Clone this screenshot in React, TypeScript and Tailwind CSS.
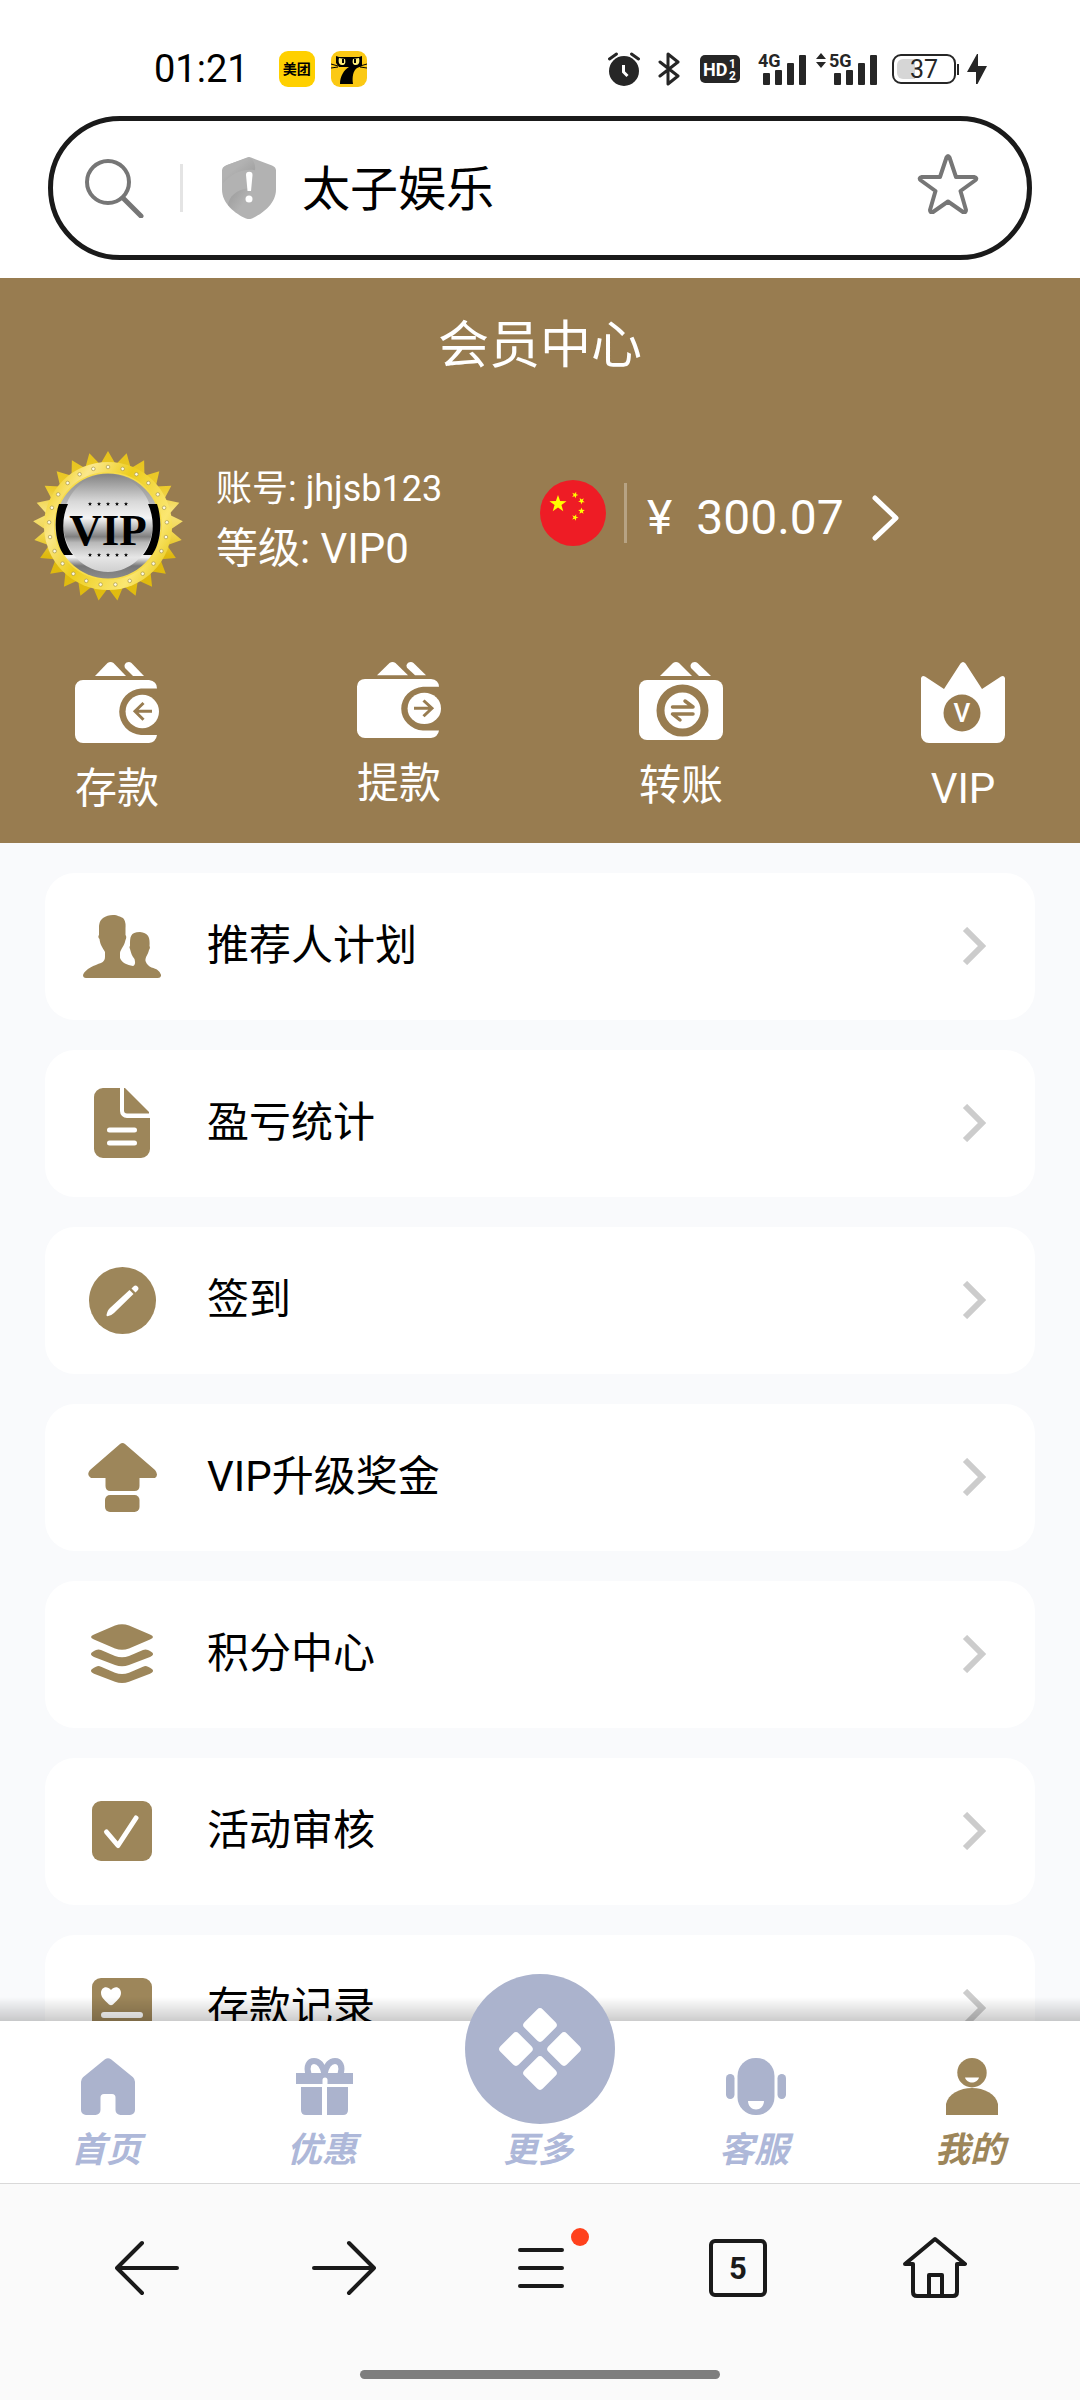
import { useState } from "react";
import type { ReactNode } from "react";

const starPoints = (cx: number, cy: number, r: number, turn = 0, inner = 0.4) =>
  Array.from({ length: 10 }, (_, i) => {
    const a = ((i * 36 - 90 + turn) * Math.PI) / 180;
    const d = i % 2 ? r * inner : r;
    return `${(cx + d * Math.cos(a)).toFixed(2)},${(cy + d * Math.sin(a)).toFixed(2)}`;
  }).join(" ");

const polar = (r: number, deg: number) => {
  const a = ((deg - 90) * Math.PI) / 180;
  return [75 + r * Math.cos(a), 75 + r * Math.sin(a)];
};

const rays = Array.from({ length: 25 }, (_, i) => i * 14.4);

/* ---------- status bar ---------- */

function SignalBars() {
  return (
    <>
      <rect x="0" y="20" width="7" height="12" rx="1" />
      <rect x="12" y="17" width="7" height="15" rx="1" />
      <rect x="24" y="10" width="7" height="22" rx="1" />
      <rect x="36" y="2" width="7" height="30" rx="1" />
    </>
  );
}

function StatusBar() {
  return (
    <div className="flex h-[42px] items-center justify-between pl-[154px] pr-[93px]">
      <div className="flex items-center">
        <span className="text-[38px] leading-[42px] text-black">01:21</span>
        <span className="ml-[30px] flex size-9 items-center justify-center rounded-[9px] bg-[#ffd000] text-[14px] leading-none font-bold text-black">
          美团
        </span>
        <svg className="ml-4 size-9" viewBox="0 0 36 36">
          <rect width="36" height="36" rx="9" fill="#fbc914" />
          <path d="M5 5l3 1h20l3-1v10l-5 2c-4 3-5 9-4 16H9c0-8 4-14 9-17H8l-3-4z" fill="#000" />
          <path d="M0 13l7 2M0 17l7-1M36 13l-7 2M36 17l-7-1" stroke="#000" strokeWidth="1" />
          <path d="M8 7c-1 4 0 7 3 7s4-2 3-6zM28 7c1 4 0 7-3 7s-4-2-3-6z" fill="#ffef7a" />
          <path d="M12 8v4M24 8v4" stroke="#000" strokeWidth="2" />
        </svg>
      </div>

      <div className="flex items-center text-[#262626]">
        <svg className="h-[34px] w-8" viewBox="0 0 32 34" fill="currentColor">
          <circle cx="16" cy="19" r="15" />
          <path d="M1.500 7l7-5M30.500 7l-7-5" stroke="currentColor" strokeWidth="3" strokeLinecap="round" />
          <path d="M15.500 13v7l4 4" stroke="#fff" strokeWidth="3" fill="none" />
        </svg>
        <svg className="ml-[18px] h-[34px] w-[22px]" viewBox="0 0 22 34" fill="none" stroke="currentColor" strokeWidth="3" strokeLinejoin="round" strokeLinecap="round">
          <path d="M2 10l18 14-10 8V2l10 8L2 24" />
        </svg>
        <svg className="ml-5 h-7 w-10" viewBox="0 0 40 28" fontFamily="Roboto, sans-serif" fontWeight="700">
          <rect width="40" height="28" rx="5" fill="currentColor" />
          <text x="3" y="21" fontSize="18" fill="#fff">HD</text>
          <text x="29" y="13" fontSize="12" fill="#fff">1</text>
          <text x="29" y="25" fontSize="12" fill="#fff">2</text>
        </svg>
        <svg className="ml-[18px] h-[34px] w-12" viewBox="0 0 48 34" fill="currentColor" fontFamily="Roboto, sans-serif" fontWeight="700">
          <g transform="translate(5 1)"><SignalBars /></g>
          <text x="0" y="15" fontSize="18" stroke="#fff" strokeWidth="3" paintOrder="stroke">4G</text>
        </svg>
        <svg className="ml-[10px] h-[34px] w-[61px]" viewBox="0 0 61 34" fill="currentColor" fontFamily="Roboto, sans-serif" fontWeight="700">
          <path d="M0 7l5-6 5 6zM0 10l5 6 5-6z" />
          <g transform="translate(18 1)"><SignalBars /></g>
          <text x="13" y="15" fontSize="18" stroke="#fff" strokeWidth="3" paintOrder="stroke">5G</text>
        </svg>
        <svg className="ml-[15px] h-8 w-[68px]" viewBox="0 0 68 32">
          <rect x="1" y="2" width="62" height="28" rx="8" fill="none" stroke="currentColor" strokeWidth="2" />
          <path d="M11 6h12v20H11a6 6 0 0 1-6-6v-8a6 6 0 0 1 6-6z" fill="#d6d6d6" />
          <rect x="65" y="11" width="2" height="11" fill="currentColor" />
          <text x="32" y="25" fontSize="25" textAnchor="middle" fill="currentColor" fontFamily="Roboto, sans-serif">37</text>
        </svg>
        <svg className="ml-[7px] h-8 w-5" viewBox="0 0 20 32" fill="currentColor">
          <path d="M10 1L0 19h9v12h1.500L20 13h-9V1z" />
        </svg>
      </div>
    </div>
  );
}

function AddressBar() {
  return (
    <div className="mx-12 mt-[26px] mb-[18px] flex h-36 items-center rounded-full border-5 border-[#1a1a1a] pr-12 pl-8">
      <svg className="size-[60px] shrink-0" viewBox="0 0 60 60" fill="none" stroke="#767676">
        <circle cx="23" cy="24" r="21" strokeWidth="4" />
        <path d="M39 41l17 17" strokeWidth="5" strokeLinecap="round" />
      </svg>
      <div className="ml-[35px] h-12 w-[3px] bg-[#e4e4e4]" />
      <svg className="ml-[39px] h-[62px] w-[54px] shrink-0" viewBox="0 0 54 62">
        <defs>
          <linearGradient id="shieldTop" x1="0" y1="0" x2="1" y2="1">
            <stop offset="0.400" stopColor="#b2b2b2" />
            <stop offset="1" stopColor="#979797" />
          </linearGradient>
          <linearGradient id="shieldLow" x1="0" y1="0" x2="1" y2="1">
            <stop offset="0" stopColor="#999" />
            <stop offset="0.600" stopColor="#b2b2b2" />
          </linearGradient>
        </defs>
        <path d="M25 .5q2-.8 4 0l21 8q4 1.500 4 5v19c0 14-13 24-24 29q-3 1.200-6 0C13 56.500 0 46.500 0 32.500v-19q0-3.500 4-5z" fill="#b2b2b2" />
        <path d="M27 .3c4 2 7 7 6 13-12-2-23 3-32 13V13q0-3.500 4-5z" fill="url(#shieldTop)" />
        <path d="M6 48c1-8 8-16 22-17v31q-14-5-22-14z" fill="url(#shieldLow)" />
        <path d="M24 18a3.200 3.200 0 0 1 6.500 0L29 34h-3.500z" fill="#fff" />
        <circle cx="27" cy="42" r="3.500" fill="#fff" />
      </svg>
      <input
        aria-label="地址栏"
        defaultValue="太子娱乐"
        className="mt-1 ml-[26px] min-w-0 flex-1 bg-transparent text-[48px] leading-[64px] text-black outline-none"
      />
      <button aria-label="收藏" className="mb-2">
        <svg className="h-[60px] w-[62px]" viewBox="0 0 62 60" fill="none" stroke="#767676" strokeWidth="4" strokeLinejoin="round">
          <path d="M29.500 3.500q1.500-3 3 0L39 23h18q4 1 1 3.500L43.500 37l5.500 19q0 3-3 2L31 47.500 16 58q-3 1-3-2l5.500-19L4 26.500Q1 24 5 23h18z" />
        </svg>
      </button>
    </div>
  );
}

/* ---------- member header ---------- */

function VipBadge() {
  return (
    <svg className="size-[150px] shrink-0" viewBox="0 0 150 150">
      <defs>
        <linearGradient id="vipRay" gradientUnits="userSpaceOnUse" x1="0" y1="0" x2="0" y2="150">
          <stop offset="0" stopColor="#e6c21a" />
          <stop offset="0.250" stopColor="#eccb2e" />
          <stop offset="0.400" stopColor="#f7e27c" />
          <stop offset="0.550" stopColor="#f0d650" />
          <stop offset="0.700" stopColor="#dfb80e" />
          <stop offset="1" stopColor="#e0bc10" />
        </linearGradient>
        <linearGradient id="vipRing" x1="0" y1="0.200" x2="1" y2="0.800">
          <stop offset="0" stopColor="#f0cf1e" />
          <stop offset="0.200" stopColor="#fbe88c" />
          <stop offset="0.450" stopColor="#edcd1c" />
          <stop offset="0.800" stopColor="#fbe772" />
          <stop offset="1" stopColor="#e8c818" />
        </linearGradient>
        <linearGradient id="vipRim" x1="0" y1="0" x2="0" y2="1">
          <stop offset="0" stopColor="#8a8a8a" />
          <stop offset="0.500" stopColor="#d8d8d8" />
          <stop offset="0.800" stopColor="#efefef" />
          <stop offset="0.880" stopColor="#777" />
          <stop offset="1" stopColor="#8b8b8b" />
        </linearGradient>
        <linearGradient id="vipFace" x1="0" y1="0" x2="0" y2="1">
          <stop offset="0" stopColor="#828282" />
          <stop offset="0.280" stopColor="#d8d8d8" />
          <stop offset="0.450" stopColor="#f4f4f4" />
          <stop offset="0.640" stopColor="#7f7f7f" />
          <stop offset="0.700" stopColor="#b8b8b8" />
          <stop offset="0.850" stopColor="#e6e6e6" />
          <stop offset="1" stopColor="#cfcfcf" />
        </linearGradient>
      </defs>
      <polygon
        points={rays.flatMap((deg) => [polar(75, deg), polar(62, deg + 7.2)]).map((p) => p.join(",")).join(" ")}
        fill="url(#vipRay)"
      />
      <circle cx="75" cy="75" r="64" fill="url(#vipRing)" />
      {rays.map((deg) => {
        const [x, y] = polar(59, deg);
        return <circle key={deg} cx={x} cy={y} r="1.800" fill="#fffbe0" stroke="#a8964a" strokeWidth="0.700" />;
      })}
      <circle cx="75" cy="75" r="54" fill="#f7dc4a" />
      <circle cx="75" cy="75" r="52.500" fill="url(#vipRim)" />
      <ellipse cx="75" cy="72" rx="45" ry="49" fill="url(#vipFace)" />
      <path d="M26 53h9C28 68 28 89 40 104H31C21 90 21 67 26 53z" fill="#000" />
      <path d="M124 53h-9c7 15 7 36-5 51h9c10-14 10-37 5-51z" fill="#000" />
      {[57, 66, 75, 84, 93].map((x) => (
        <g key={x}>
          <polygon points={starPoints(x, 53, 2.2)} />
          <polygon points={starPoints(x, 104, 2.2)} />
        </g>
      ))}
      <text x="75" y="94" fontSize="45" fontWeight="700" textAnchor="middle" fontFamily="Liberation Serif, serif">VIP</text>
    </svg>
  );
}

function ChinaFlag() {
  return (
    <svg className="size-[66px]" viewBox="0 0 66 66">
      <circle cx="33" cy="33" r="33" fill="#ee1c25" />
      <g fill="#ff0">
        <polygon points={starPoints(18, 24, 9)} />
        <polygon points={starPoints(35, 15, 3.5, 20)} />
        <polygon points={starPoints(41.5, 21, 3.5, 40)} />
        <polygon points={starPoints(41.5, 31, 3.5)} />
        <polygon points={starPoints(35, 37.5, 3.5, 20)} />
      </g>
    </svg>
  );
}

function WalletIcon({ arrow, className }: { arrow: string; className: string }) {
  return (
    <svg className={className} viewBox="0 0 84 81" preserveAspectRatio="none" fill="#fff">
      <path d="M32.500 1q3-2 6 0L51 14H20z" />
      <path d="M50 6q-1.500-3.500 1.500-5.500 3-1.200 5 .5L69 14H58z" />
      <path d="M8 18h66q8 1 8 8.500H66a23.300 23.300 0 0 0 0 46.500h16q-1 7-8 8H8a8 8 0 0 1-8-8V26a8 8 0 0 1 8-8z" />
      <circle cx="67.300" cy="49.500" r="16.700" />
      <path d={arrow} stroke="#987c50" strokeWidth="3" fill="none" />
    </svg>
  );
}

function TransferIcon() {
  return (
    <svg className="h-[78px] w-[84px]" viewBox="0 0 84 78" fill="#fff">
      <path d="M34 1q3-2 6 0l13 13H21z" />
      <path d="M52 6q-1.500-3.500 1.500-5.500 3-1.200 5 .5L72 14H60z" />
      <rect y="18" width="84" height="60" rx="8" />
      <circle cx="43.500" cy="48.500" r="22" fill="none" stroke="#987c50" strokeWidth="8" />
      <path d="M33.500 45H54l-8-6M54 52H33.500l7.500 6" fill="none" stroke="#987c50" strokeWidth="3.500" strokeLinecap="round" strokeLinejoin="round" />
    </svg>
  );
}

function CrownIcon() {
  return (
    <svg className="h-[81px] w-[84px]" viewBox="0 0 84 81">
      <path d="M39.500 1.500q2.500-3 5 0L61 27l19-12.500q3-1.500 4 1.500v57a8 8 0 0 1-8 8H8a8 8 0 0 1-8-8V16q1-3 4-1.500L23 27z" fill="#fff" />
      <circle cx="41" cy="51" r="18.500" fill="#987c50" />
      <text x="41" y="60" fontSize="26" fontWeight="500" textAnchor="middle" fill="#fff" fontFamily="Roboto, sans-serif">V</text>
    </svg>
  );
}

const actions: { label: string; icon: ReactNode }[] = [
  { label: "存款", icon: <WalletIcon className="h-[81px] w-[84px]" arrow="M77 49.300H60M68.500 41l-8.500 8.300 8.500 8.500" /> },
  { label: "提款", icon: <WalletIcon className="h-[76px] w-[84px]" arrow="M57 49.300h18M66.500 41l8.500 8.300-8.500 8.500" /> },
  { label: "转账", icon: <TransferIcon /> },
  { label: "VIP", icon: <CrownIcon /> },
];

function MemberHeader() {
  return (
    <section className="bg-[#987c50] text-white">
      <h1 className="flex h-[132px] items-center justify-center pt-1 text-[51px]">会员中心</h1>

      <div className="mt-[41px] flex items-start">
        <div className="flex w-1/2 items-start gap-[33px] pl-[33px]">
          <VipBadge />
          <div className="pt-[9px] leading-[59px] whitespace-nowrap">
            <p className="text-[36px]">账号: jhjsb123</p>
            <p className="text-[42px]">等级: VIP0</p>
          </div>
        </div>
        <button className="flex h-[118px] items-center pt-4">
          <span className="flex items-center gap-[18px] pb-2.5">
            <ChinaFlag />
            <span className="h-[60px] w-[3px] bg-white/30" />
          </span>
          <span className="ml-5 text-[48px] leading-[56px]">¥</span>
          <span className="ml-6 text-[48px] leading-[56px]">300.07</span>
          <svg className="ml-7 h-[46px] w-[27px]" viewBox="0 0 27 46" fill="none" stroke="#fff" strokeWidth="5" strokeLinecap="round" strokeLinejoin="round">
            <path d="M3 3l21 20L3 43" />
          </svg>
        </button>
      </div>

      <div className="mt-[61px] flex items-start justify-between px-[75px] pb-[29px]">
        {actions.map((a) => (
          <button key={a.label} className="flex w-[84px] flex-col items-center gap-[21px]">
            {a.icon}
            <span className="text-[42px] leading-[50px]">{a.label}</span>
          </button>
        ))}
      </div>
    </section>
  );
}

/* ---------- menu list ---------- */

const menu: { label: string; icon: ReactNode }[] = [
  {
    label: "推荐人计划",
    icon: (
      <svg className="h-[63px] w-[78px]" viewBox="0 0 78 63" fill="currentColor">
        <path d="M30 0c5 0 7 2 10 3q3 3 2.500 10v7q1.500 2 0 5c-1 6-5 9-5.500 13v5c2 5 7 7 13 8 3-1 2-5 1.500-7-2.500-3-3.500-6-4.500-10q-1-2 0-3c0-9 0-14 10-14 9 1 10 6 9.500 14q1 2-.5 4c-1 5-4 7-3.500 11 2 7 10 7 12 9q4 3 3.500 6-.5 2-3 2H3q-3 0-3-3c2-6 12-10 18-12q4-2 4-6v-5c-2-4-5-7-5.500-13q-2-2-.5-4V11c1-5 1-5 4-8 3-2 6-3 10-3z" />
      </svg>
    ),
  },
  {
    label: "盈亏统计",
    icon: (
      <svg className="h-[70px] w-14" viewBox="0 0 56 70" fill="currentColor">
        <path d="M9 0h17v23a7 7 0 0 0 7 7h23v31a9 9 0 0 1-9 9H9a9 9 0 0 1-9-9V9a9 9 0 0 1 9-9z" />
        <path d="M30 0h1l24 24v1.500H33a3 3 0 0 1-3-3z" />
        <path d="M15.500 42h25M15.500 55h25" stroke="#fff" strokeWidth="5" strokeLinecap="round" />
      </svg>
    ),
  },
  {
    label: "签到",
    icon: (
      <svg className="size-[67px]" viewBox="0 0 67 67">
        <circle cx="33.500" cy="33.500" r="33.500" fill="currentColor" />
        <path d="M17.500 48q1-5 3.500-7l19.500-18 4 4L25 46q-3 3-6.500 3.200-1 0-1-1.200zM42.500 21.500l2-2q2-2 4 0t0 4l-2 2z" fill="#fff" />
      </svg>
    ),
  },
  {
    label: "VIP升级奖金",
    icon: (
      <svg className="size-[69px]" viewBox="0 0 69 69" fill="currentColor">
        <path d="M32 1q2.500-2 5 0l30 26q4 5 0 8H51.500v8q0 5-5 5h-24q-5 0-5-5v-8H3q-5-3-1-8z" />
        <rect x="17" y="52" width="34.500" height="17" rx="5" />
      </svg>
    ),
  },
  {
    label: "积分中心",
    icon: (
      <svg className="h-[60px] w-[62px]" viewBox="0 0 62 60" fill="currentColor">
        <path d="M24 1.500q7-2.500 14 0l21 9q6 2.500 0 5l-21 9q-7 2.500-14 0l-21-9q-6-2.500 0-5z" />
        <path d="M5 26q2.500-1.200 5 0l14 6q7 2.500 14 0l14-6q2.500-1.200 5 0 9 4 2 7l-21 8q-7 2.500-14 0L3 33q-7-3 2-7z" />
        <path d="M5 42.700q2.500-1.200 5 0l14 6q7 2.500 14 0l14-6q2.500-1.200 5 0 9 4 2 7l-21 8q-7 2.500-14 0l-21-8q-7-3 2-7z" />
      </svg>
    ),
  },
  {
    label: "活动审核",
    icon: (
      <svg className="size-[60px]" viewBox="0 0 60 60">
        <rect width="60" height="60" rx="9" fill="currentColor" />
        <path d="M14.500 31L26 44.500 44 17" fill="none" stroke="#fff" strokeWidth="5" strokeLinecap="round" strokeLinejoin="round" />
      </svg>
    ),
  },
  {
    label: "存款记录",
    icon: (
      <svg className="size-[60px]" viewBox="0 0 60 60">
        <rect width="60" height="60" rx="9" fill="currentColor" />
        <path d="M19 12c4-5 10-3 10 3 0 5-5 8-8 11.500q-2 1.500-4 0C14 23 9 20 9 15c0-6 6-8 10-3z" fill="#fff" />
        <path d="M12 37h36M12 49h22" stroke="#fff" strokeWidth="6" strokeLinecap="round" />
      </svg>
    ),
  },
];

function MenuList() {
  return (
    <ul className="flex flex-col gap-[30px] px-[45px] py-[30px]">
      {menu.map((m) => (
        <li key={m.label}>
          <a href="#" className="flex h-[147px] items-center rounded-[30px] bg-white pr-[49px] pb-px pl-[38px]">
            <span className="flex w-[78px] shrink-0 justify-center text-[#9d865a]">{m.icon}</span>
            <span className="ml-[46px] flex-1 text-[42px] leading-[56px] text-black">{m.label}</span>
            <svg className="h-[38px] w-6" viewBox="0 0 24 38" fill="none" stroke="#ccc" strokeWidth="6">
              <path d="M3 2l17 17L3 36" />
            </svg>
          </a>
        </li>
      ))}
    </ul>
  );
}

/* ---------- bottom navigation ---------- */

const tabs: { label: string; icon: ReactNode }[] = [
  {
    label: "首页",
    icon: (
      <svg className="h-[57px] w-[54px]" viewBox="0 0 54 57" fill="currentColor">
        <path d="M24 1.200q3-2 6 0l22 18q2 2 2 4.500V52a5 5 0 0 1-5 5h-9.500a5 5 0 0 1-5-5V39.500q0-3.500-3.500-3.500h-8q-3.500 0-3.500 3.500V52a5 5 0 0 1-5 5H5a5 5 0 0 1-5-5V23.700q0-2.500 2-4.500z" />
      </svg>
    ),
  },
  {
    label: "优惠",
    icon: (
      <svg className="size-[57px]" viewBox="0 0 57 57" fill="currentColor">
        <path d="M0 15h57v11H31.500v-4a2 2 0 0 0-5 0v4H0zM5 29h21v28H10q-5 0-5-5zM31 29h21v23q0 5-5 5H31z" />
        <path d="M12.500 16C10 8 13 3 18 3c6 0 9 6 10.500 13C30 9 33 3 39 3c5 0 8 5 5.500 13" fill="none" stroke="currentColor" strokeWidth="6" />
      </svg>
    ),
  },
  {
    label: "更多",
    icon: (
      <span className="h-[57px]">
        <svg className="absolute -top-[47px] left-1/2 size-[150px] -translate-x-1/2" viewBox="0 0 150 150">
          <circle cx="75" cy="75" r="75" fill="#abb3cd" />
          <g fill="#fff" transform="rotate(45 75 75)">
            <rect x="45" y="45" width="26" height="26" rx="4" />
            <rect x="79" y="45" width="26" height="26" rx="4" />
            <rect x="45" y="79" width="26" height="26" rx="4" />
            <rect x="79" y="79" width="26" height="26" rx="4" />
          </g>
        </svg>
      </span>
    ),
  },
  {
    label: "客服",
    icon: (
      <svg className="h-[57px] w-[60px]" viewBox="0 0 60 57" fill="currentColor">
        <rect x="11.500" width="37" height="57" rx="18" />
        <rect y="16" width="8.500" height="25" rx="4.200" />
        <rect x="51.500" y="16" width="8.500" height="25" rx="4.200" />
        <path d="M22 43h16c0 5-4 8.500-8 8.500S22 48 22 43z" fill="#fff" />
      </svg>
    ),
  },
  {
    label: "我的",
    icon: (
      <svg className="h-[57px] w-[52px]" viewBox="0 0 52 57" fill="currentColor">
        <circle cx="26" cy="14.700" r="14.700" />
        <path d="M0 57V46c2-10 14-16 26-16s24 6 26 16v11z" />
        <path d="M19 19.500h14c-1 3.500-4 5-7 5s-6-1.500-7-5z" fill="#fff" />
      </svg>
    ),
  },
];

function TabBar() {
  const [active, setActive] = useState(4);
  return (
    <nav className="relative z-10 flex h-[162px] shrink-0 bg-white">
      <div className="pointer-events-none absolute inset-x-0 bottom-full h-6 bg-linear-to-t from-black/20 to-transparent" />
      {tabs.map((t, i) => (
        <button
          key={t.label}
          onClick={() => setActive(i)}
          className={`relative flex flex-1 flex-col items-center gap-4 pt-[37px] ${active === i ? "text-[#9d865a]" : "text-[#abb3cd]"}`}
        >
          {t.icon}
          <span className={`pr-1 text-[35px] leading-10 font-bold italic ${active === i ? "text-[#9d865a]" : "text-[#aeb8d9]"}`}>
            {t.label}
          </span>
        </button>
      ))}
    </nav>
  );
}

function BrowserBar() {
  const btn = "relative flex size-16 items-center justify-center";
  return (
    <footer className="flex h-[217px] shrink-0 flex-col items-center justify-between border-t border-[#d9d9d9] bg-[#fafafa] pt-[52px] pb-[21px] text-[#1a1a1a]">
      <div className="flex w-full justify-between pr-[113px] pl-[115px]">
        <button aria-label="后退" className={btn}>
          <svg className="size-16" viewBox="0 0 64 64" fill="none" stroke="currentColor" strokeWidth="4" strokeLinecap="round" strokeLinejoin="round">
            <path d="M62 32H2M27 7L2 32l25 25" />
          </svg>
        </button>
        <button aria-label="前进" className={btn}>
          <svg className="size-16" viewBox="0 0 64 64" fill="none" stroke="currentColor" strokeWidth="4" strokeLinecap="round" strokeLinejoin="round">
            <path d="M2 32h60M37 7l25 25-25 25" />
          </svg>
        </button>
        <button aria-label="菜单" className={btn}>
          <svg className="h-10 w-[46px]" viewBox="0 0 46 40" stroke="currentColor" strokeWidth="4" strokeLinecap="round">
            <path d="M2 2h42M2 20h42M2 38h42" />
          </svg>
          <span className="absolute -top-2 -right-4 size-[18px] rounded-full bg-[#ff411c]" />
        </button>
        <button aria-label="标签页" className={btn}>
          <span className="flex size-[58px] items-center justify-center rounded-[6px] border-4 border-current text-[31px] leading-none font-bold">5</span>
        </button>
        <button aria-label="主页" className={btn}>
          <svg className="size-16" viewBox="0 0 64 64" fill="none" stroke="currentColor" strokeWidth="4" strokeLinecap="round" strokeLinejoin="round">
            <path d="M10 28H2L32 3l30 25h-8v28q0 4-4 4H14q-4 0-4-4zM26 60V39h13v21" />
          </svg>
        </button>
      </div>
      <div className="h-[9px] w-1/3 rounded-full bg-[#7e7e7e]" />
    </footer>
  );
}

export default function App() {
  return (
    <div className="flex h-screen flex-col bg-white font-[Roboto,'Noto_Sans_CJK_SC',sans-serif]">
      <header className="shrink-0 pt-12">
        <StatusBar />
        <AddressBar />
      </header>
      <main className="min-h-0 flex-1 overflow-y-auto bg-[#f9fafc] [scrollbar-width:none]">
        <MemberHeader />
        <MenuList />
      </main>
      <TabBar />
      <BrowserBar />
    </div>
  );
}
